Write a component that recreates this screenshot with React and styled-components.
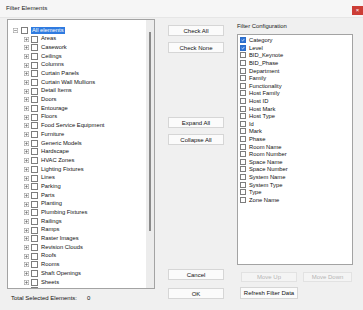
import React from 'react';
import styled, { createGlobalStyle } from 'styled-components';

const Global = createGlobalStyle`
  html, body { margin: 0; padding: 0; background: #f0f0f0; }
  body { font-family: "Liberation Sans", Arial, sans-serif; color: #111; }
  * { box-sizing: border-box; }
`;

const Window = styled.div`
  width: 363px;
  height: 310px;
  display: flex;
  flex-direction: column;
  background: #f0f0f0;
  overflow: hidden;
`;

const TitleBar = styled.div`
  height: 18px;
  display: flex;
  align-items: flex-start;
  background: #f6f6f6;
  border-bottom: 1px solid #e6e6e6;
`;

const Title = styled.div`
  font-size: 6.2px;
  line-height: 8px;
  margin: 4px 0 0 6px;
  color: #222;
`;

const CloseButton = styled.div`
  margin: 6px 0 0 auto;
  width: 11px;
  height: 9px;
  background: #cc3d36;
  color: #fff;
  font-size: 6px;
  line-height: 9px;
  text-align: center;
`;

const Body = styled.div`
  flex: 1;
  display: grid;
  grid-template-columns: 148px 56px 116px;
  column-gap: 13px;
  padding-left: 7px;
`;

const Column = styled.div`
  display: flex;
  flex-direction: column;
  min-height: 0;
`;

const TreeBox = styled.div`
  margin-top: 1px;
  height: 270px;
  display: flex;
  background: #fff;
  border: 1px solid #a3a3a3;
`;

const TreeList = styled.div`
  flex: 1;
  overflow: hidden;
  padding-top: 6px;
`;

const TreeRow = styled.div`
  height: 8.7px;
  display: flex;
  align-items: center;
  padding-left: ${p => (p.$level === 0 ? 5 : 16)}px;
  gap: ${p => (p.$level === 0 ? 3 : 2)}px;
  font-size: 5.8px;
  white-space: nowrap;
  color: #111;
`;

const TreeLabel = styled.span`
  line-height: 7.5px;
  padding: 0 1px;
  background: ${p => (p.$selected ? '#2f7be0' : 'transparent')};
  color: ${p => (p.$selected ? '#fff' : '#111')};
`;

const Box = styled.span`
  flex: none;
  width: ${p => p.$size}px;
  height: ${p => p.$size}px;
  border: 1px solid ${p => (p.$checked ? '#2a6cc9' : '#7d7d7d')};
  background: ${p => (p.$checked ? '#2f74d6' : '#fff')};
  display: flex;
  align-items: center;
  justify-content: center;
`;

const ScrollTrack = styled.div`
  width: 8px;
  background: #ececec;
  display: flex;
  justify-content: center;
`;

const ScrollThumb = styled.div`
  margin-top: 12px;
  width: 2px;
  height: 199px;
  background: #8a8a8a;
`;

const TotalLine = styled.div`
  margin-top: 4px;
  padding-left: 4px;
  display: flex;
  gap: 10px;
  font-size: 6px;
  line-height: 10px;
  color: #111;
  white-space: nowrap;
`;

const Group = styled.div`
  display: flex;
  flex-direction: column;
  gap: ${p => p.$gap}px;
  margin-top: ${p => p.$mt};
  margin-bottom: ${p => p.$mb || 0}px;
`;

const Button = styled.div`
  height: ${p => p.$h || 11}px;
  width: ${p => (p.$w ? `${p.$w}px` : 'auto')};
  display: flex;
  align-items: center;
  justify-content: center;
  background: ${p => (p.$disabled ? '#f4f4f4' : '#fbfbfb')};
  border: 1px solid ${p => (p.$disabled ? '#e2e2e2' : '#d6d6d6')};
  font-size: 6px;
  color: ${p => (p.$disabled ? '#b4b4b4' : '#111')};
  white-space: nowrap;
`;

const SectionLabel = styled.div`
  margin-top: 4px;
  font-size: 5.9px;
  line-height: 8px;
  color: #222;
`;

const ConfigBox = styled.div`
  margin-top: 4px;
  height: 231px;
  background: #fff;
  border: 1px solid #a3a3a3;
  padding: 1.3px 0 0 2px;
  overflow: hidden;
`;

const ConfigRow = styled.div`
  height: 7.62px;
  display: flex;
  align-items: center;
  gap: 3px;
  font-size: 5.8px;
  white-space: nowrap;
  color: #111;
`;

const ButtonRow = styled.div`
  display: flex;
  gap: ${p => p.$gap || 0}px;
  margin-top: ${p => p.$mt}px;
  padding-left: ${p => p.$pl}px;
`;

const Expander = ({ open }) => (
  <svg width="5" height="5" viewBox="0 0 9 9" style={{ flex: 'none' }}>
    <rect x="0.5" y="0.5" width="8" height="8" fill="#fff" stroke="#9a9a9a" />
    <line x1="2" y1="4.5" x2="7" y2="4.5" stroke="#555" />
    {!open && <line x1="4.5" y1="2" x2="4.5" y2="7" stroke="#555" />}
  </svg>
);

const Check = ({ size, checked }) => (
  <Box $size={size} $checked={checked}>
    {checked && (
      <svg width={size - 2} height={size - 2} viewBox="0 0 8 8">
        <path d="M1.2 4.2 L3.2 6 L6.8 1.8" fill="none" stroke="#fff" strokeWidth="1.4" />
      </svg>
    )}
  </Box>
);

const categories = [
  'Areas', 'Casework', 'Ceilings', 'Columns', 'Curtain Panels', 'Curtain Wall Mullions',
  'Detail Items', 'Doors', 'Entourage', 'Floors', 'Food Service Equipment', 'Furniture',
  'Generic Models', 'Hardscape', 'HVAC Zones', 'Lighting Fixtures', 'Lines', 'Parking',
  'Parts', 'Planting', 'Plumbing Fixtures', 'Railings', 'Ramps', 'Raster Images',
  'Revision Clouds', 'Roofs', 'Rooms', 'Shaft Openings', 'Sheets', 'Site', 'Specialty Equipment',
];

const params = [
  'Category', 'Level', 'BID_Keynote', 'BID_Phase', 'Department', 'Family', 'Functionality',
  'Host Family', 'Host ID', 'Host Mark', 'Host Type', 'Id', 'Mark', 'Phase', 'Room Name',
  'Room Number', 'Space Name', 'Space Number', 'System Name', 'System Type', 'Type', 'Zone Name',
];
const checkedParams = new Set(['Category', 'Level']);

export default function App() {
  return (
    <>
      <Global />
      <Window>
        <TitleBar>
          <Title>Filter Elements</Title>
          <CloseButton>×</CloseButton>
        </TitleBar>
        <Body>
          <Column>
            <TreeBox>
              <TreeList>
                <TreeRow $level={0}>
                  <Expander open />
                  <Check size={7} />
                  <TreeLabel $selected>All elements</TreeLabel>
                </TreeRow>
                {categories.map(c => (
                  <TreeRow $level={1} key={c}>
                    <Expander />
                    <Check size={7} />
                    <TreeLabel>{c}</TreeLabel>
                  </TreeRow>
                ))}
              </TreeList>
              <ScrollTrack>
                <ScrollThumb />
              </ScrollTrack>
            </TreeBox>
            <TotalLine>
              <span>Total Selected Elements:</span>
              <span>0</span>
            </TotalLine>
          </Column>

          <Column>
            <Group $gap={6} $mt="7px">
              <Button>Check All</Button>
              <Button>Check None</Button>
            </Group>
            <Group $gap={6} $mt="64px">
              <Button>Expand All</Button>
              <Button>Collapse All</Button>
            </Group>
            <Group $gap={8} $mt="auto" $mb={11}>
              <Button>Cancel</Button>
              <Button>OK</Button>
            </Group>
          </Column>

          <Column>
            <SectionLabel>Filter Configuration</SectionLabel>
            <ConfigBox>
              {params.map(p => (
                <ConfigRow key={p}>
                  <Check size={6} checked={checkedParams.has(p)} />
                  <span>{p}</span>
                </ConfigRow>
              ))}
            </ConfigBox>
            <ButtonRow $mt={7} $pl={4} $gap={6}>
              <Button $disabled $w={56} $h={10}>Move Up</Button>
              <Button $disabled $w={49} $h={10}>Move Down</Button>
            </ButtonRow>
            <ButtonRow $mt={5} $pl={3}>
              <Button $w={58} $h={12}>Refresh Filter Data</Button>
            </ButtonRow>
          </Column>
        </Body>
      </Window>
    </>
  );
}
